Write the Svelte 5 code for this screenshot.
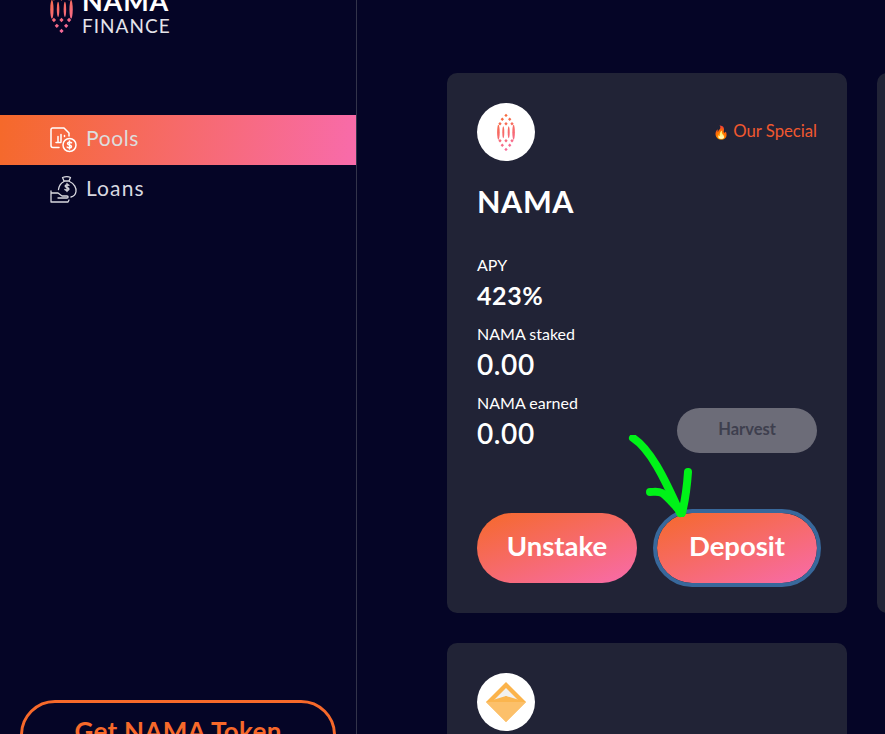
<script>
  const dots = [
    [0, -16.6], [-3.7, -12.7], [3.7, -12.7], [-6, -8.3], [0, -8.3], [6, -8.3],
    [-6, 8.7], [0, 8.7], [6, 8.7], [-3.7, 13.3], [3.7, 13.3], [0, 17.4]
  ];
  const lenses = [[-7.6, 1.300, 7.500], [-2.7, 1, 6], [2.7, 1, 6], [7.6, 1.300, 7.500]];
</script>

{#snippet mark()}
  <g fill="url(#mg)">
    {#each dots as d}
      <path d="M{d[0]} {d[1] - 1.700}l1.700 1.700-1.700 1.700-1.700-1.700Z" />
    {/each}
    {#each lenses as l}
      <ellipse cx={l[0]} cy="0.300" rx={l[1]} ry={l[2]} />
    {/each}
  </g>
{/snippet}

<svg class="defs" width="0" height="0" aria-hidden="true">
  <defs>
    <linearGradient id="mg" gradientUnits="userSpaceOnUse" x1="-9" y1="-19" x2="9" y2="19">
      <stop offset="0" stop-color="#f76b2c" />
      <stop offset="1" stop-color="#f76ba8" />
    </linearGradient>
  </defs>
</svg>

<div class="page">
  <aside class="side">
    <div class="brand">
      <svg class="brand-mark" width="23" height="48" viewBox="-9 -19 18 38">{@render mark()}</svg>
      <div class="brand-text">
        <div class="brand-top">NAMA</div>
        <div class="brand-sub">FINANCE</div>
      </div>
    </div>

    <nav class="nav">
      <a class="item active" href="#pools">
        <svg width="28" height="28" viewBox="0 -0.500 28 28" fill="none" stroke="#fff" stroke-width="1.500" stroke-linecap="round" stroke-linejoin="round">
          <path d="M9 21H3a2 2 0 0 1-2-2V3a1.500 1.500 0 0 1 1.500-1.500H14l5 5v3" />
          <path d="M6 16h5M8 15V10M11 15V8M14.500 9v1" />
          <circle cx="19.500" cy="18.500" r="6.500" />
          <path d="M21.500 16.300c-.6-.8-3.800-1-4 .8-.1 1.800 4.200 1 4 3-.2 1.700-3.500 1.500-4.300.5M19.500 14.500v8" />
        </svg>
        <span>Pools</span>
      </a>
      <a class="item" href="#loans">
        <svg width="28" height="28" viewBox="0 -1 28 28" fill="none" stroke="#d9d9e0" stroke-width="1.300" stroke-linecap="round" stroke-linejoin="round">
          <path d="M14 4 12.500.5c3-1 6-1 8 0L19 4Z" />
          <path d="M19.500 4.500c5 2 7 7 6.500 10-.4 3-2.500 5-5 5.500" />
          <path d="M14 4.500c-3 1.500-5 4.500-5.500 8" />
          <path d="M19 8.300c-.6-.8-3.800-.8-3.900.8-.1 1.800 4.100 1 3.900 3-.2 1.600-3.300 1.400-4.100.4M17 6.500v8" />
          <path d="M1 14v11h17l1-2M1 16h7l4 3h5c1.500 0 1.500 2 0 2H8" />
        </svg>
        <span>Loans</span>
      </a>
    </nav>

    <button class="token">Get NAMA Token</button>
  </aside>

  <main class="main">
    <div class="col">
      <section class="card">
        <div class="card-head">
          <div class="coin">
            <svg width="18" height="38" viewBox="-9 -19 18 38">{@render mark()}</svg>
          </div>
          <div class="special"><span class="flame">🔥</span> Our Special</div>
        </div>
        <h2>NAMA</h2>
        <div class="stat first">
          <div class="label">APY</div>
          <div class="value bold">423%</div>
        </div>
        <div class="stat">
          <div class="label">NAMA staked</div>
          <div class="value">0.00</div>
        </div>
        <div class="stat-row">
          <div class="stat">
            <div class="label">NAMA earned</div>
            <div class="value">0.00</div>
          </div>
          <button class="harvest">Harvest</button>
        </div>
        <div class="actions">
          <button class="cta">Unstake</button>
          <button class="cta focus">Deposit</button>
        </div>
      </section>

      <section class="card">
        <div class="card-head">
          <div class="coin">
            <svg width="42" height="42" viewBox="0 0 42 42">
              <path d="M21 1 41 21H1Z" fill="#fbb34b" />
              <path d="M21 7 33 19l-5 2-7-6-7 6-5-2Z" fill="#f1f1f1" />
              <path d="M1 21 21 15l20 6-20 20Z" fill="#fbb54e" />
              <path d="M1 21h40L21 41Z" fill="#fcc06a" />
            </svg>
          </div>
        </div>
      </section>
    </div>
    <section class="card next"></section>
  </main>

  <svg class="arrow" width="70" height="90" viewBox="0 0 70 90" fill="none" stroke="#00f218" stroke-width="8" stroke-linecap="round" stroke-linejoin="round">
    <path d="M5 3C22 14 36 42 52 78" />
    <path d="M60 37C59 52 57 66 54 78C46 70 40 62 34 58C30 56 26 57 22 57" />
  </svg>
</div>

<style>
  :global(body) {
    margin: 0;
    background: #050526;
  }
  .defs {
    position: absolute;
  }
  .page {
    position: relative;
    display: flex;
    height: 734px;
    overflow: hidden;
    background: #050526;
    font-family: Lato, "Open Sans", sans-serif;
    color: #fff;
  }
  .side {
    box-sizing: border-box;
    flex: 0 0 357px;
    height: 734px;
    border-right: 1px solid #33344a;
    display: flex;
    flex-direction: column;
  }
  .brand {
    display: flex;
    gap: 9px;
    margin: -15px 0 0 50px;
    height: 48px;
  }
  .brand-text {
    line-height: 1;
    margin-top: 2px;
  }
  .brand-top {
    font-size: 27px;
    font-weight: 700;
    letter-spacing: 0.8px;
    height: 27px;
    line-height: 27px;
  }
  .brand-sub {
    font-size: 19px;
    letter-spacing: 1px;
    color: #e4e4ea;
    line-height: 24px;
  }
  .nav {
    margin-top: 82px;
  }
  .item {
    display: flex;
    align-items: center;
    gap: 8px;
    height: 50px;
    padding-left: 50px;
    font-size: 21px;
    color: #d9d9e0;
    text-decoration: none;
    letter-spacing: 0.6px;
  }
  .item + .item {
    letter-spacing: 1.100px;
  }
  .item span {
    padding-bottom: 5px;
  }
  .active {
    background: linear-gradient(100deg, #f5692a, #f86bab);
    color: #ddd;
  }
  .token {
    box-sizing: border-box;
    margin: auto 0 0 20px;
    transform: translateY(36px);
    width: 316px;
    height: 70px;
    flex: none;
    border: 3px solid #f7692a;
    border-radius: 35px;
    background: none;
    color: #f7692a;
    font: 700 26px Lato, sans-serif;
    padding: 0 0 8px;
    letter-spacing: 0.3px;
  }
  .main {
    display: flex;
    gap: 30px;
    padding: 73px 0 0 90px;
    flex: none;
  }
  .col {
    display: flex;
    flex-direction: column;
    gap: 30px;
    flex: none;
  }
  .card {
    box-sizing: border-box;
    width: 400px;
    height: 540px;
    padding: 30px;
    background: #212336;
    border-radius: 10px;
    flex: none;
  }
  .card-head {
    display: flex;
    justify-content: space-between;
    align-items: center;
  }
  .coin {
    width: 58px;
    height: 58px;
    border-radius: 50%;
    background: #fff;
    display: flex;
    align-items: center;
    justify-content: center;
  }
  .special {
    color: #f0582f;
    font-size: 16.700px;
    margin-bottom: 3px;
  }
  .flame {
    font-size: 13px;
  }
  h2 {
    margin: 17px 0 0;
    font-size: 30.500px;
    font-weight: 700;
    line-height: 46px;
    letter-spacing: 0.6px;
  }
  .stat.first {
    margin-top: 30px;
  }
  .stat {
    margin-bottom: 9px;
  }
  .label {
    font-size: 16px;
    line-height: 22px;
  }
  .value {
    font-size: 28px;
    line-height: 38px;
    font-weight: 600;
    letter-spacing: 0.6px;
  }
  .bold {
    font-size: 25px;
    font-weight: 700;
  }
  .stat-row {
    display: flex;
    justify-content: space-between;
    align-items: flex-start;
  }
  .harvest {
    width: 140px;
    height: 45px;
    margin-top: 16px;
    border: 0;
    border-radius: 23px;
    background: #6c6c78;
    color: #3e3f4e;
    font: 700 16.500px Lato, sans-serif;
    padding: 0 0 3px;
  }
  .actions {
    display: flex;
    justify-content: space-between;
    margin-top: 52px;
  }
  .cta {
    width: 160px;
    height: 70px;
    border: 0;
    border-radius: 35px;
    background: linear-gradient(160deg, #f5692a, #f86bab);
    color: #fff;
    font: 700 27.500px Lato, sans-serif;
    padding: 0 0 5px;
  }
  .focus {
    outline: 4px solid #38689b;
    outline-offset: 0;
  }
  .arrow {
    position: absolute;
    left: 628px;
    top: 435px;
  }
</style>
